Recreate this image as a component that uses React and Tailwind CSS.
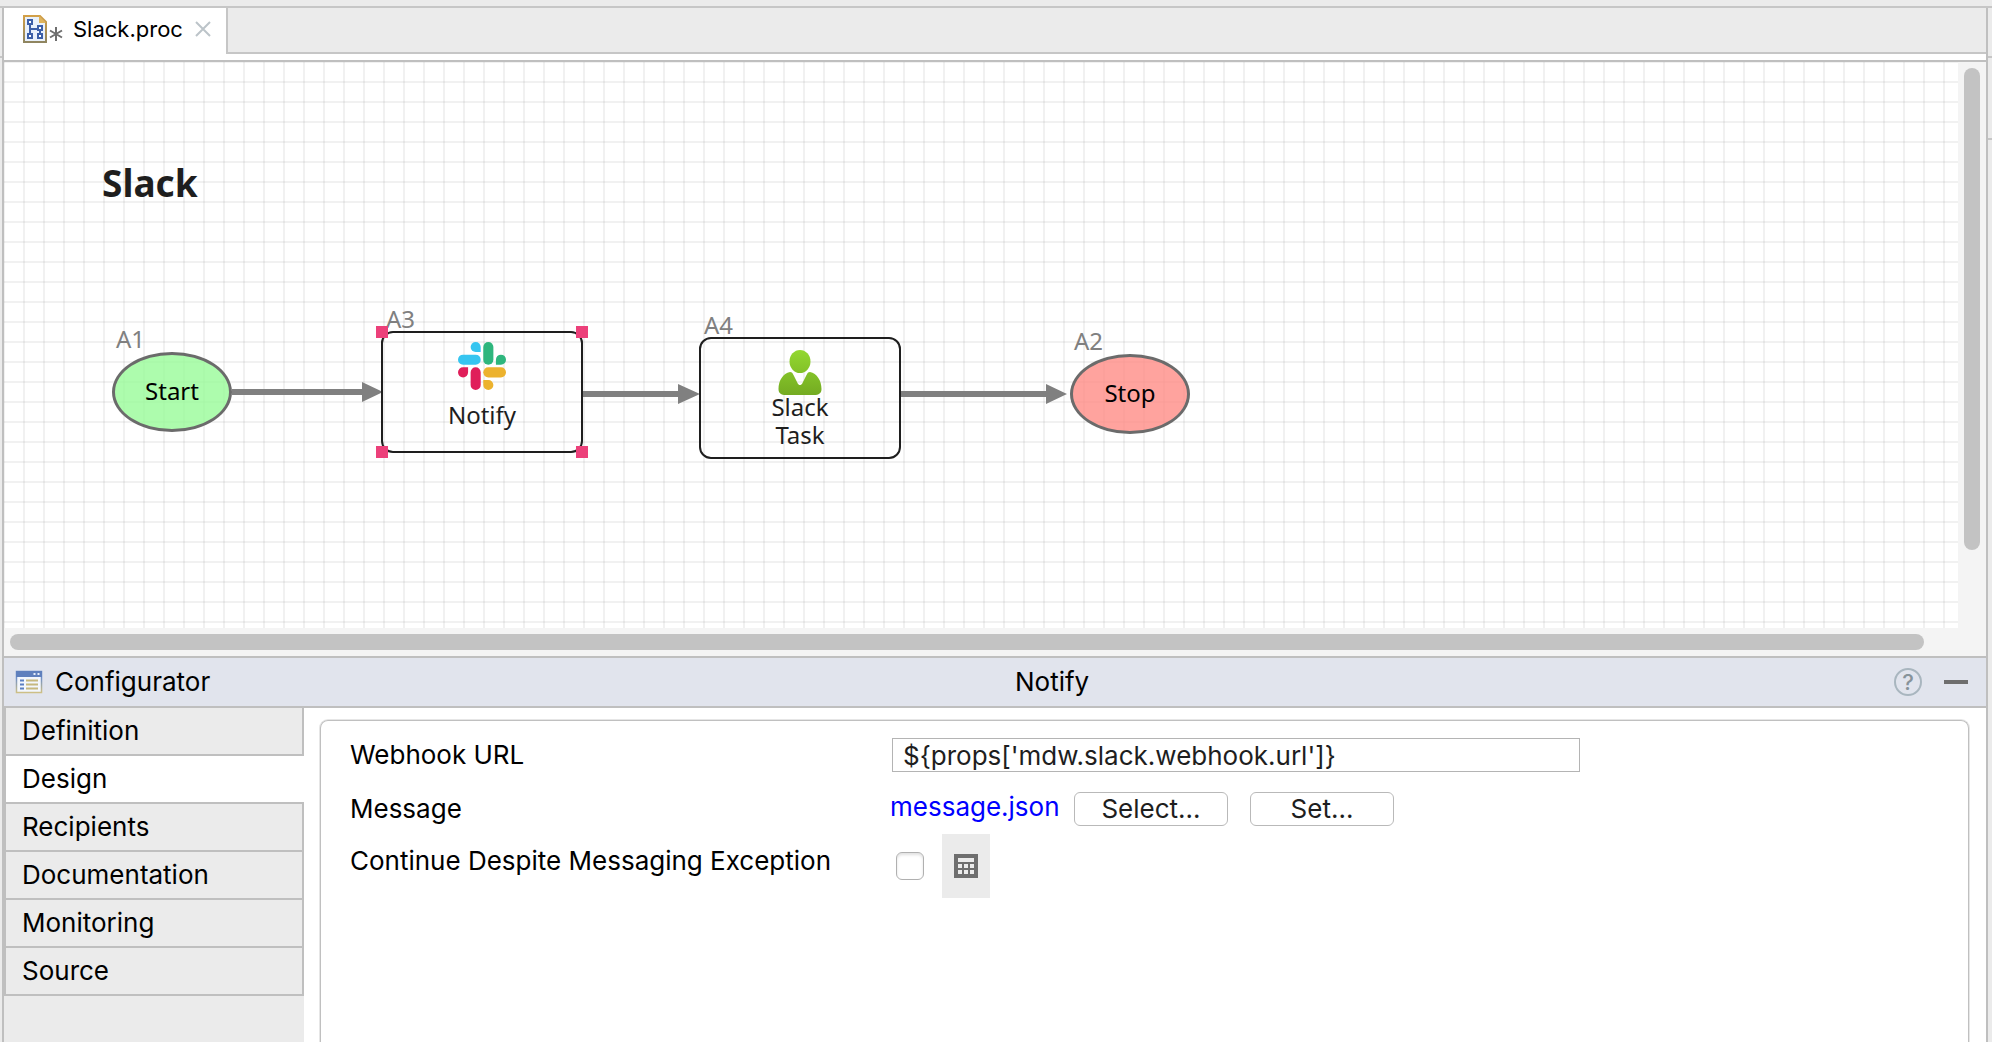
import React, { useState } from "react";

const CANVAS_FONT = "font-['Noto_Sans',sans-serif]";

function ProcessIcon() {
  return (
    <svg viewBox="0 0 24 28" className="h-7 w-6 shrink-0" aria-hidden="true">
      <defs>
        <linearGradient id="pageEdge" x1="0" y1="0" x2="0" y2="1">
          <stop offset="0" stopColor="#d3a048" />
          <stop offset="1" stopColor="#8f8560" />
        </linearGradient>
      </defs>
      <path d="M1 1H17L23 7V27H1Z" fill="#e9f1fb" stroke="url(#pageEdge)" strokeWidth="2" />
      <path d="M16 1V8H23Z" fill="#e0b45c" />
      <g fill="#fff" stroke="#3c5fa8" strokeWidth="2">
        <path d="M7 9V20M7 14H16M17 14V20" fill="none" />
        <rect x="5" y="5" width="4" height="4" />
        <rect x="5" y="19" width="4" height="4" />
        <rect x="15" y="11" width="4" height="4" />
        <rect x="15" y="19" width="4" height="4" />
      </g>
    </svg>
  );
}

function ModifiedMark() {
  return (
    <svg viewBox="0 0 14 14" className="mt-2.5 ml-0.5 size-3.5 shrink-0" aria-hidden="true">
      <path d="M7 0V14M1 3.5L13 10.5M13 3.5L1 10.5" stroke="#6e6e6e" strokeWidth="2" />
    </svg>
  );
}

function ConfiguratorIcon() {
  return (
    <svg viewBox="0 0 28 24" className="h-6 w-7 shrink-0" aria-hidden="true">
      <defs>
        <linearGradient id="frame" x1="0" y1="0" x2="0" y2="1">
          <stop offset="0.3" stopColor="#6f8fc8" />
          <stop offset="1" stopColor="#cdbf86" />
        </linearGradient>
      </defs>
      <rect x="1.5" y="1.5" width="25" height="21" fill="#f3f7fd" stroke="url(#frame)" strokeWidth="1.5" />
      <rect x="1" y="1" width="26" height="6" fill="#5f80bd" />
      <path d="M18.500 3H20.500V5H18.500ZM22.500 3H24.500V5H22.500Z" fill="#e8eefa" />
      <path d="M5 10.500H9M5 14.500H9M5 18.500H9" stroke="#5b7fc2" strokeWidth="2" />
      <path d="M11 10.500H23M11 14.500H23M11 18.500H23" stroke="#c6b87e" strokeWidth="2" />
    </svg>
  );
}

function SlackIcon() {
  return (
    <svg viewBox="0 0 24 24" className="size-12" aria-hidden="true">
      <g fill="#e01e5a">
        <path d="M5.042 15.165a2.528 2.528 0 0 1-2.520 2.523A2.528 2.528 0 0 1 0 15.165a2.527 2.527 0 0 1 2.522-2.520h2.520v2.520z" />
        <path d="M6.313 15.165a2.527 2.527 0 0 1 2.521-2.520 2.527 2.527 0 0 1 2.521 2.520v6.313A2.528 2.528 0 0 1 8.834 24a2.528 2.528 0 0 1-2.521-2.522v-6.313z" />
      </g>
      <g fill="#36c5f0">
        <path d="M8.834 5.042a2.528 2.528 0 0 1-2.521-2.520A2.528 2.528 0 0 1 8.834 0a2.528 2.528 0 0 1 2.521 2.522v2.520H8.834z" />
        <path d="M8.834 6.313a2.528 2.528 0 0 1 2.521 2.521 2.528 2.528 0 0 1-2.521 2.521H2.522A2.528 2.528 0 0 1 0 8.834a2.528 2.528 0 0 1 2.522-2.521h6.312z" />
      </g>
      <g fill="#2eb67d">
        <path d="M18.956 8.834a2.528 2.528 0 0 1 2.522-2.521A2.528 2.528 0 0 1 24 8.834a2.528 2.528 0 0 1-2.522 2.521h-2.522V8.834z" />
        <path d="M17.688 8.834a2.528 2.528 0 0 1-2.523 2.521 2.527 2.527 0 0 1-2.520-2.521V2.522A2.527 2.527 0 0 1 15.165 0a2.528 2.528 0 0 1 2.523 2.522v6.312z" />
      </g>
      <g fill="#ecb22e">
        <path d="M15.165 18.956a2.528 2.528 0 0 1 2.523 2.522A2.528 2.528 0 0 1 15.165 24a2.527 2.527 0 0 1-2.520-2.522v-2.522h2.520z" />
        <path d="M15.165 17.688a2.527 2.527 0 0 1-2.520-2.523 2.526 2.526 0 0 1 2.520-2.520h6.313A2.527 2.527 0 0 1 24 15.165a2.528 2.528 0 0 1-2.522 2.523h-6.313z" />
      </g>
    </svg>
  );
}

function PersonIcon() {
  return (
    <svg viewBox="0 0 48 48" className="size-12 shrink-0" aria-hidden="true">
      <defs>
        <linearGradient id="person" gradientUnits="userSpaceOnUse" x1="0" y1="1" x2="0" y2="46">
          <stop offset="0" stopColor="#93d82f" />
          <stop offset="1" stopColor="#74ab22" />
        </linearGradient>
      </defs>
      <g fill="url(#person)">
        <ellipse cx="24" cy="12.500" rx="10.500" ry="11.500" />
        <path d="M14 23C16 23 16.500 24 17.500 26L21.500 34C22.800 36.800 25.200 36.800 26.500 34L30.500 26C31.500 24 32 23 34 23C41 24 45.500 32 45.500 40C45.500 44 43 46 38 46H10C5 46 2.500 44 2.500 40C2.500 32 7 24 14 23Z" />
      </g>
    </svg>
  );
}

function CalculatorIcon() {
  return (
    <svg viewBox="0 0 24 24" className="size-6" aria-hidden="true">
      <path d="M0 0H24V24H0Z" fill="#6e6e6e" />
      <path
        d="M4 4H20V8H4ZM4 10H8V14H4ZM10 10H14V14H10ZM16 10H20V14H16ZM4 16H8V20H4ZM10 16H14V20H10ZM16 16H20V20H16Z"
        fill="#ebebeb"
      />
    </svg>
  );
}

function Handle({ place }) {
  return <span className={`absolute size-3 bg-[#ec407a] ${place}`} />;
}

function NodeId({ children, place }) {
  return <span className={`absolute text-2xl leading-8 text-[#808080] ${place}`}>{children}</span>;
}

function Canvas() {
  return (
    <div className="relative min-h-0 min-w-0 flex-1 overflow-hidden bg-white bg-[linear-gradient(to_right,#0000000e_2px,transparent_2px),linear-gradient(to_bottom,#0000000e_2px,transparent_2px)] bg-[size:20px_20px] bg-[position:19px_19px]">
      <div className={CANVAS_FONT}>
        <h1 className="absolute top-[97px] left-[98px] text-[37px] leading-12 font-bold text-[#1e1e1e]">Slack</h1>

        <svg className="absolute top-0 left-0 h-[566px] w-[1954px]" aria-hidden="true">
          <g fill="#808080">
            <path d="M228 327H358V320L379 330L358 340V333H228Z" />
            <path d="M579 329H674V322L696 332L674 342V335H579Z" />
            <path d="M896 329H1042V322L1063 332L1042 342V335H896Z" />
          </g>
        </svg>

        <NodeId place="top-[261px] left-[112px]">A1</NodeId>
        <div className="absolute top-[290px] left-[108px] flex h-20 w-[120px] items-center justify-center rounded-[50%] border-3 border-[#6b6b6b] bg-[#98fb98]/80 pb-0.5 text-2xl text-black">
          Start
        </div>

        <NodeId place="top-[241px] left-[382px]">A3</NodeId>
        <div className="absolute top-[269px] left-[377px] flex h-[122px] w-[202px] flex-col items-center rounded-xl border-2 border-[#1e1e1e] pt-[9px] text-2xl text-[#1e1e1e]">
          <SlackIcon />
          <span className="mt-[11px] leading-7">Notify</span>
          <Handle place="-top-[7px] -left-[7px]" />
          <Handle place="-top-[7px] -right-[7px]" />
          <Handle place="-bottom-[7px] -left-[7px]" />
          <Handle place="-right-[7px] -bottom-[7px]" />
        </div>

        <NodeId place="top-[247px] left-[700px]">A4</NodeId>
        <div className="absolute top-[275px] left-[695px] flex h-[122px] w-[202px] flex-col items-center rounded-xl border-2 border-[#1e1e1e] pt-2.5 text-2xl text-[#1e1e1e]">
          <PersonIcon />
          <span className="-mt-1 w-16 text-center leading-7">Slack Task</span>
        </div>

        <NodeId place="top-[263px] left-[1070px]">A2</NodeId>
        <div className="absolute top-[292px] left-[1066px] flex h-20 w-[120px] items-center justify-center rounded-[50%] border-3 border-[#6b6b6b] bg-[#ff8c86]/80 pb-0.5 text-2xl text-black">
          Stop
        </div>
      </div>
    </div>
  );
}

function Editor() {
  return (
    <div className="flex min-h-0 flex-1 flex-col bg-[#f4f4f4]">
      <div className="flex min-h-0 flex-1">
        <Canvas />
        <div className="w-7 shrink-0 px-1.5 pt-1.5">
          <div className="h-[86%] rounded-full bg-[#c3c3c3]" />
        </div>
      </div>
      <div className="h-7 shrink-0 py-1.5 pr-[62px] pl-1.5">
        <div className="h-4 rounded-full bg-[#c3c3c3]" />
      </div>
    </div>
  );
}

const SECTIONS = ["Definition", "Design", "Recipients", "Documentation", "Monitoring", "Source"];

function Sidebar({ active, onSelect }) {
  return (
    <nav className="flex w-[300px] shrink-0 flex-col bg-[#ebebeb]">
      {SECTIONS.map((name) => (
        <button
          key={name}
          type="button"
          onClick={() => onSelect(name)}
          className={
            "h-12 shrink-0 border-b-2 border-l-2 border-[#bfbfbf] pl-4 text-left " +
            (name === active ? "bg-white" : "border-r-2 bg-[#ebebeb]")
          }
        >
          {name}
        </button>
      ))}
    </nav>
  );
}

function DesignForm() {
  const [url, setUrl] = useState("${props['mdw.slack.webhook.url']}");
  const button =
    "h-[34px] rounded-md border border-[#b9b9b9] bg-white text-center leading-8 text-[#1e1e1e]";
  return (
    <form className="flex-1 rounded-t-lg border border-b-0 border-[#c0c0c0] pt-[17px] pl-[29px] shadow-[0_0_0_1px_#e6e6e6]">
      <div className="flex h-[34px] items-center">
        <label htmlFor="webhook" className="w-[542px] shrink-0">Webhook URL</label>
        <input
          id="webhook"
          type="text"
          value={url}
          onChange={(e) => setUrl(e.target.value)}
          className="h-[34px] w-[688px] border border-[#b4b4b4] bg-white px-2.5 text-[#1e1e1e] outline-none"
        />
      </div>
      <div className="mt-5 flex h-[34px] items-center">
        <span className="w-[540px] shrink-0">Message</span>
        <a href="#message" className="mb-1 w-[184px] shrink-0 text-[#0000ff]">message.json</a>
        <button type="button" className={`${button} w-[154px]`}>Select...</button>
        <button type="button" className={`${button} ml-[22px] w-36`}>Set...</button>
      </div>
      <div className="mt-2 flex h-16 items-center">
        <label htmlFor="continue" className="mb-2.5 w-[546px] shrink-0">
          Continue Despite Messaging Exception
        </label>
        <input
          id="continue"
          type="checkbox"
          className="size-7 appearance-none rounded-md border border-[#b0b0b0] bg-white shadow-[inset_0_2px_3px_#0000001f] checked:bg-blue-500"
        />
        <button
          type="button"
          aria-label="Expression"
          className="ml-[18px] flex h-16 w-12 items-center justify-center bg-[#ebebeb]"
        >
          <CalculatorIcon />
        </button>
      </div>
    </form>
  );
}

function Configurator() {
  const [active, setActive] = useState("Design");
  return (
    <section className="flex shrink-0 basis-[386px] flex-col border-t-2 border-[#bfbfbf] bg-white text-[26px] leading-8 text-black">
      <header className="flex h-[50px] shrink-0 items-center border-b-2 border-[#bfbfbf] bg-[#e1e4ed]">
        <div className="flex items-center gap-3 pl-[11px]">
          <ConfiguratorIcon />
          <h2>Configurator</h2>
        </div>
        <span className="flex-1 text-center">Notify</span>
        <div className="flex items-center justify-end gap-[22px] pr-[18px]">
          <button
            type="button"
            aria-label="Help"
            className="flex size-7 items-center justify-center rounded-full border-2 border-[#a9b6bf] text-[22px] leading-6 font-medium text-[#87939a]"
          >
            ?
          </button>
          <button type="button" aria-label="Minimize" className="flex h-7 w-6 items-center">
            <span className="h-1 w-full bg-[#6e6e6e]" />
          </button>
        </div>
      </header>
      <div className="flex flex-1">
        <Sidebar active={active} onSelect={setActive} />
        <div className="flex flex-1 pt-3 pr-[17px] pl-4">
          <DesignForm />
        </div>
      </div>
    </section>
  );
}

export default function App() {
  return (
    <div className="flex h-screen min-h-[800px] flex-col bg-[#ebebeb] pt-1.5 font-['Inter',sans-serif]">
      <div className="flex min-h-0 flex-1 border-t-2 border-[#c6c6c6]">
        <div className="w-0.5 shrink-0 pt-12">
          <div className="h-0.5 bg-[#c6c6c6]" />
        </div>
        <main className="flex min-w-0 flex-1 flex-col border-x-2 border-[#bfbfbf]">
          <div className="flex h-[46px] shrink-0">
            <div className="flex w-56 shrink-0 items-center border-r-2 border-[#c6c6c6] bg-white pb-1 pl-[19px]">
              <ProcessIcon />
              <ModifiedMark />
              <span className="ml-2.5 text-[22px] leading-7 text-black">Slack.proc</span>
              <button type="button" aria-label="Close tab" className="ml-3">
                <svg viewBox="0 0 16 16" className="size-4">
                  <path d="M1 1L15 15M15 1L1 15" stroke="#bcc4c9" strokeWidth="2" />
                </svg>
              </button>
            </div>
            <div className="flex-1 border-b-2 border-[#c6c6c6]" />
          </div>
          <div className="h-2 shrink-0 border-b-2 border-[#bfbfbf] bg-white" />
          <Editor />
          <Configurator />
        </main>
        <div className="flex w-1 shrink-0 flex-col gap-20 pt-12">
          <div className="h-0.5 bg-[#c6c6c6]" />
          <div className="h-0.5 bg-[#c6c6c6]" />
        </div>
      </div>
    </div>
  );
}
